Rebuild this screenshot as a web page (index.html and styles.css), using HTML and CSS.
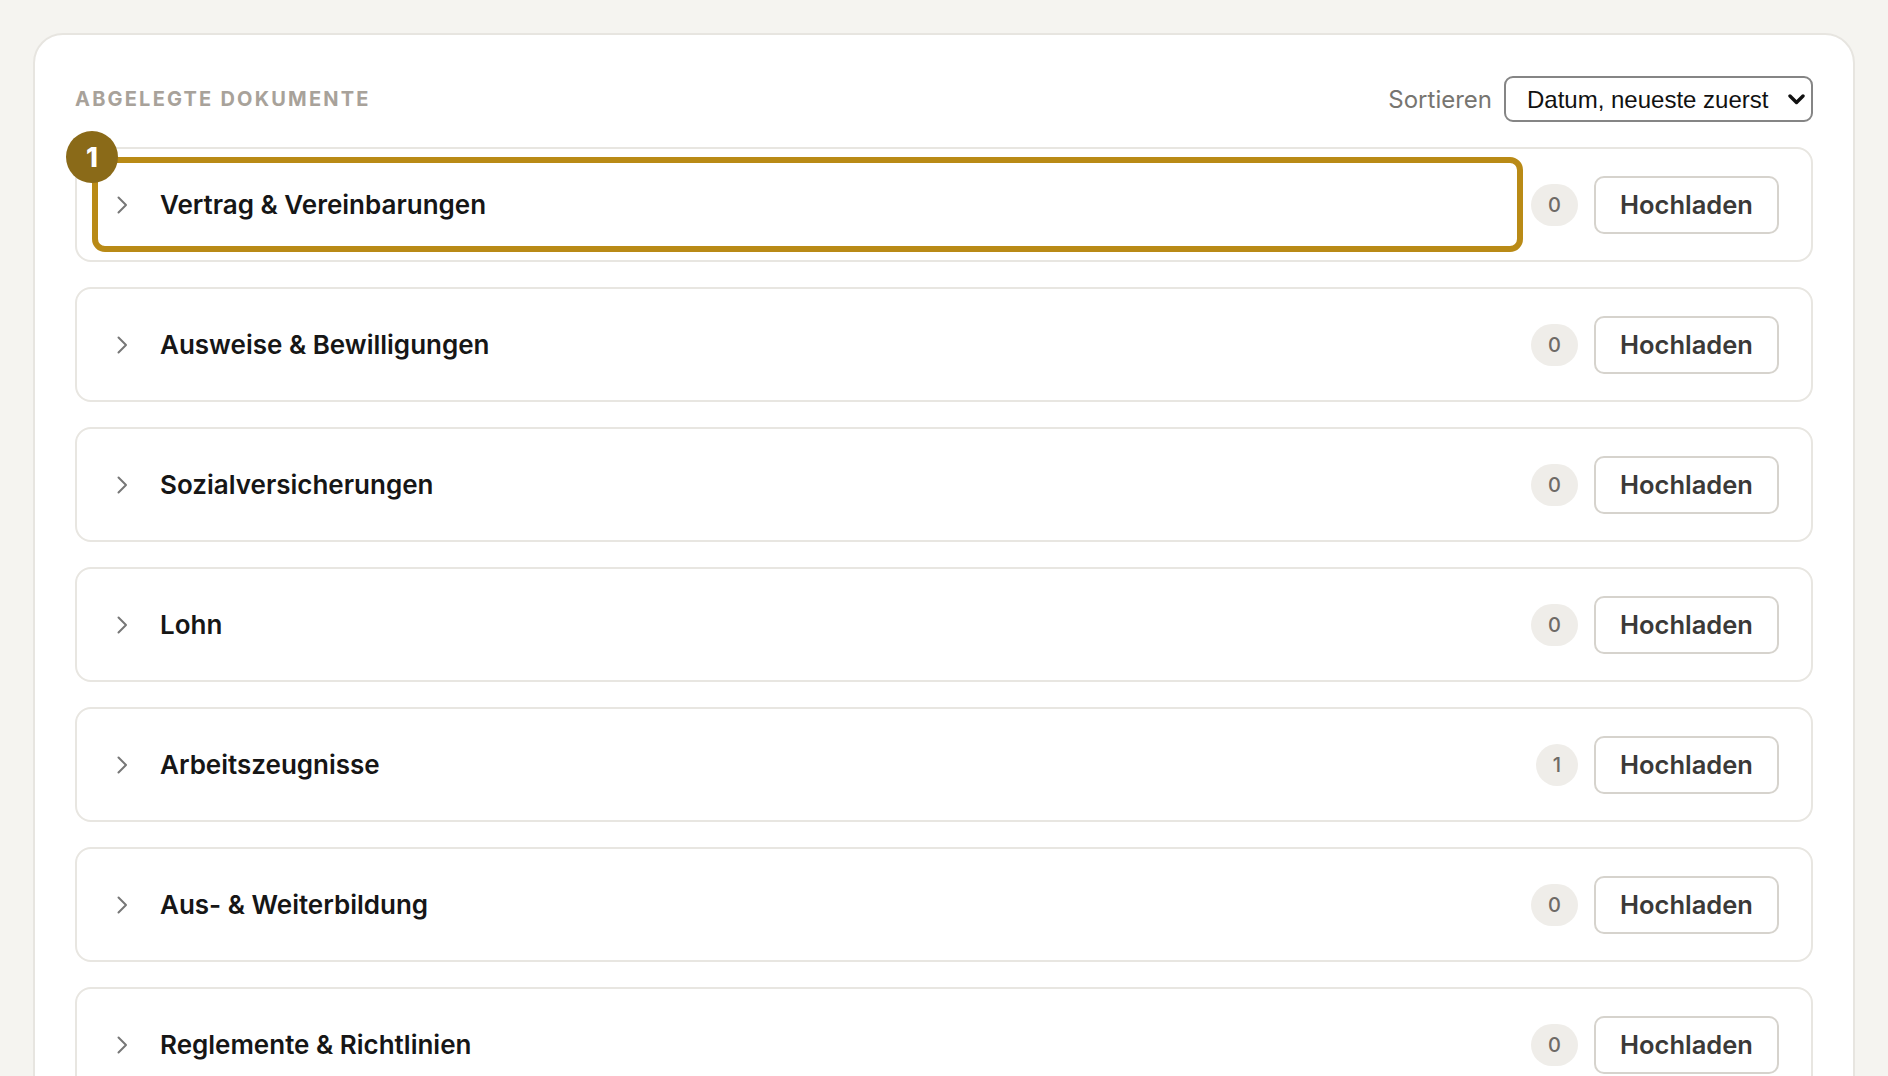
FILE: index.html
```html
<!DOCTYPE html>
<html lang="de">
<head>
<meta charset="utf-8">
<title>Abgelegte Dokumente</title>
<link rel="stylesheet" href="styles.css">
</head>
<body>
<main class="card">
  <div class="card-head">
    <h2 class="card-title">Abgelegte Dokumente</h2>
    <label class="sort">
      <span class="sort-label">Sortieren</span>
      <span class="select-wrap">
        <select class="sort-select">
          <option>Datum, neueste zuerst</option>
          <option>Datum, älteste zuerst</option>
          <option>Name</option>
        </select>
        <svg class="select-arrow" width="17" height="11" viewBox="0 0 17 11"><path d="M2 2 L8.5 8.5 L15 2" fill="none" stroke="#111" stroke-width="3.4" stroke-linecap="round" stroke-linejoin="round"/></svg>
      </span>
    </label>
  </div>
  <ul class="doc-list">
    <li class="doc-row">
      <div class="doc-head is-highlighted">
        <span class="step-badge">1</span>
        <svg class="chev" width="12" height="18" viewBox="0 0 12 18"><path d="M2.5 1.5 L10 9 L2.5 16.5" fill="none" stroke="#777" stroke-width="2" stroke-linecap="round" stroke-linejoin="round"/></svg>
        <span class="doc-name">Vertrag &amp; Vereinbarungen</span>
      </div>
      <span class="count">0</span>
      <button class="upload">Hochladen</button>
    </li>
    <li class="doc-row">
      <div class="doc-head">
        <svg class="chev" width="12" height="18" viewBox="0 0 12 18"><path d="M2.5 1.5 L10 9 L2.5 16.5" fill="none" stroke="#777" stroke-width="2" stroke-linecap="round" stroke-linejoin="round"/></svg>
        <span class="doc-name">Ausweise &amp; Bewilligungen</span>
      </div>
      <span class="count">0</span>
      <button class="upload">Hochladen</button>
    </li>
    <li class="doc-row">
      <div class="doc-head">
        <svg class="chev" width="12" height="18" viewBox="0 0 12 18"><path d="M2.5 1.5 L10 9 L2.5 16.5" fill="none" stroke="#777" stroke-width="2" stroke-linecap="round" stroke-linejoin="round"/></svg>
        <span class="doc-name">Sozialversicherungen</span>
      </div>
      <span class="count">0</span>
      <button class="upload">Hochladen</button>
    </li>
    <li class="doc-row">
      <div class="doc-head">
        <svg class="chev" width="12" height="18" viewBox="0 0 12 18"><path d="M2.5 1.5 L10 9 L2.5 16.5" fill="none" stroke="#777" stroke-width="2" stroke-linecap="round" stroke-linejoin="round"/></svg>
        <span class="doc-name">Lohn</span>
      </div>
      <span class="count">0</span>
      <button class="upload">Hochladen</button>
    </li>
    <li class="doc-row">
      <div class="doc-head">
        <svg class="chev" width="12" height="18" viewBox="0 0 12 18"><path d="M2.5 1.5 L10 9 L2.5 16.5" fill="none" stroke="#777" stroke-width="2" stroke-linecap="round" stroke-linejoin="round"/></svg>
        <span class="doc-name">Arbeitszeugnisse</span>
      </div>
      <span class="count">1</span>
      <button class="upload">Hochladen</button>
    </li>
    <li class="doc-row">
      <div class="doc-head">
        <svg class="chev" width="12" height="18" viewBox="0 0 12 18"><path d="M2.5 1.5 L10 9 L2.5 16.5" fill="none" stroke="#777" stroke-width="2" stroke-linecap="round" stroke-linejoin="round"/></svg>
        <span class="doc-name">Aus- &amp; Weiterbildung</span>
      </div>
      <span class="count">0</span>
      <button class="upload">Hochladen</button>
    </li>
    <li class="doc-row">
      <div class="doc-head">
        <svg class="chev" width="12" height="18" viewBox="0 0 12 18"><path d="M2.5 1.5 L10 9 L2.5 16.5" fill="none" stroke="#777" stroke-width="2" stroke-linecap="round" stroke-linejoin="round"/></svg>
        <span class="doc-name">Reglemente &amp; Richtlinien</span>
      </div>
      <span class="count">0</span>
      <button class="upload">Hochladen</button>
    </li>
  </ul>
</main>
</body>
</html>
```

FILE: styles.css
```css
* { box-sizing: border-box; }
html, body { margin: 0; padding: 0; }
body {
  background: #f5f4f0;
  font-family: Inter, "Noto Sans", sans-serif;
  color: #161616;
  padding: 33px;
}
.card {
  background: #ffffff;
  border: 2px solid #e7e5e0;
  border-radius: 30px;
  padding: 41px 40px 40px;
  display: flex;
  flex-direction: column;
  gap: 25px;
}
.card-head {
  display: flex;
  align-items: center;
  justify-content: space-between;
  height: 46px;
}
.card-title {
  margin: 0;
  font-size: 20px;
  font-weight: 700;
  letter-spacing: 2.2px;
  text-transform: uppercase;
  color: #a8a29a;
}
.sort { display: flex; align-items: center; gap: 12px; }
.sort-label { font-size: 24px; color: #777570; }
.select-wrap { position: relative; display: block; }
.sort-select {
  appearance: none;
  -webkit-appearance: none;
  width: 309px;
  height: 46px;
  border: 2px solid #858585;
  border-radius: 9px;
  background: #fff;
  padding: 0 40px 0 21px;
  font-family: "Liberation Sans", Arial, sans-serif;
  font-size: 24px;
  color: #111;
}
.select-arrow { position: absolute; right: 8px; top: 18px; pointer-events: none; }
.doc-list { list-style: none; margin: 0; padding: 0; display: flex; flex-direction: column; gap: 25px; }
.doc-row {
  display: flex;
  align-items: center;
  border: 2px solid #e8e6e1;
  border-radius: 16px;
  padding: 14px 32px 14px 21px;
  background: #fff;
}
.doc-head {
  position: relative;
  flex: 1;
  height: 83px;
  display: flex;
  align-items: center;
  padding-left: 18px;
  gap: 32px;
  border-radius: 7px;
  margin-right: 14px;
}
.doc-head.is-highlighted { outline: 6px solid #b98a16; outline-offset: 0; }
.step-badge {
  position: absolute;
  left: -32px;
  top: -32px;
  width: 52px;
  height: 52px;
  border-radius: 50%;
  background: #8a6a18;
  color: #fff;
  font-weight: 800;
  font-size: 27px;
  display: flex;
  align-items: center;
  justify-content: center;
}
.chev { flex: none; }
.doc-name { font-size: 26px; font-weight: 600; color: #161616; }
.count {
  height: 42px;
  padding: 0 17px;
  border-radius: 21px;
  background: #efede9;
  color: #6e6a66;
  font-size: 20px;
  font-weight: 500;
  display: flex;
  align-items: center;
  justify-content: center;
}
.upload {
  margin-left: 16px;
  height: 58px;
  width: 185px;
  border: 2px solid #d6d3cd;
  border-radius: 10px;
  background: #fff;
  font-family: inherit;
  font-size: 25.5px;
  font-weight: 600;
  color: #3b3a38;
}
```
